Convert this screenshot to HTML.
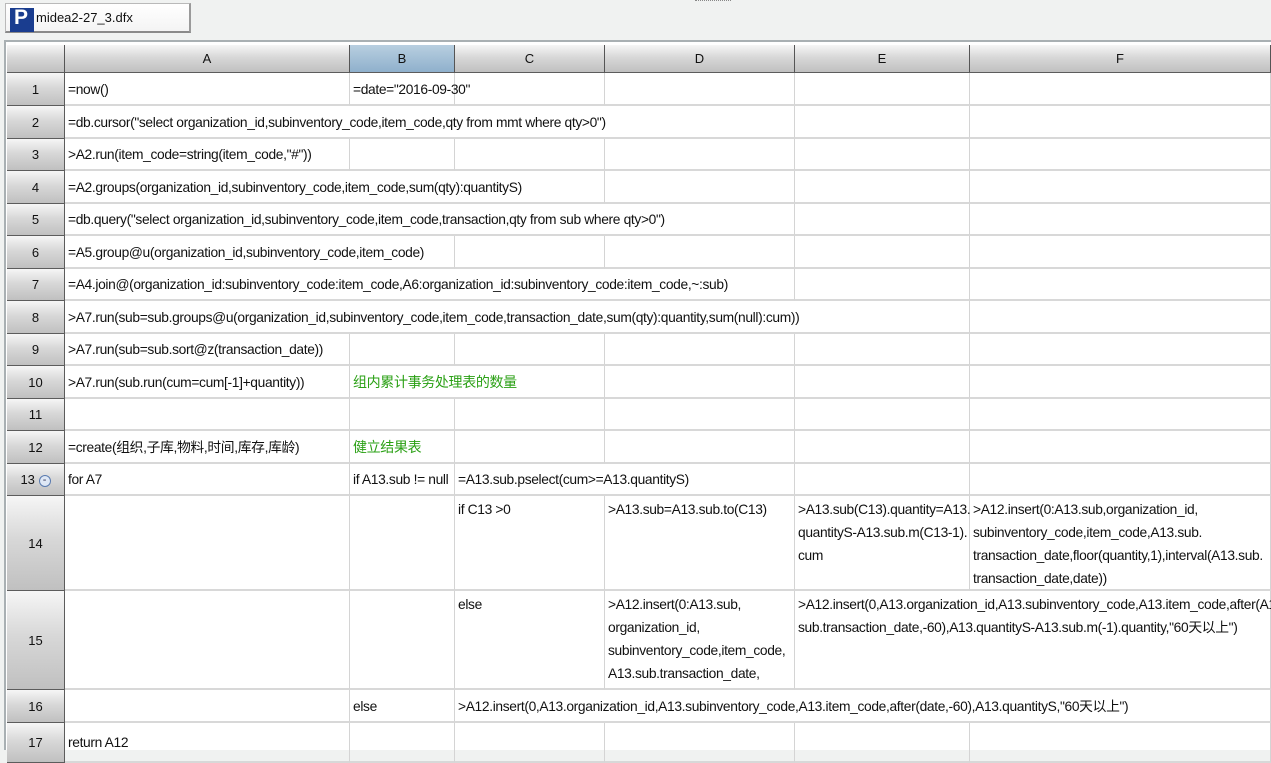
<!DOCTYPE html>
<html><head><meta charset="utf-8"><style>
*{margin:0;padding:0;box-sizing:border-box}
body{width:1271px;height:750px;overflow:hidden;background:#f0f2f1;font-family:"Liberation Sans","Noto Sans CJK SC",sans-serif;font-size:12.5px;color:#111;position:relative}
.tab{position:absolute;left:5px;top:3px;width:186px;height:30px;background:linear-gradient(#fff,#f4f4f4);border:1px solid #b9b9b9;border-bottom:2px solid #8a8a8a;border-right:2px solid #9a9a9a}
.logo{position:absolute;left:4px;top:4px;width:24px;height:24px;background:#1a3d8f}
.logo b{position:absolute;left:4px;top:-2px;color:#fff;font:bold 21px "Liberation Sans",sans-serif}
.tab span{position:absolute;left:30px;top:6px;font-size:13px}
.grid{position:absolute;left:4px;top:40px;width:1267px;height:710px;background:#fff;border-left:2px solid #a9b0b3;border-top:2px solid #a9b0b3}
.row{position:absolute;left:7px;display:flex;width:1264px}
.h{background:linear-gradient(#f6f6f6,#d8d8d8 45%,#c0c0c0);border-right:1px solid #5c5c5c;border-bottom:1px solid #5c5c5c;text-align:center;font-size:13px;flex:none}
.c{flex:none;border-right:1px solid #d4d4d4;border-bottom:2px solid #d8d8d8;padding:3px 3px;white-space:nowrap;line-height:23px;overflow:visible;font-size:13.8px;letter-spacing:-0.35px;position:relative;z-index:1}
.g{color:#2aa014;font-size:14px}
.sel{background:linear-gradient(#b8cfe0,#8fb0cc)}
</style></head><body>
<div class="tab"><div class="logo"><b>P</b></div><span>midea2-27_3.dfx</span></div>
<div style="position:absolute;left:695px;top:0;width:36px;height:2px;border-top:1px dotted #888"></div>
<div class="grid"></div>
<div id="g"></div>
<script>
var W=[58,285,105,150,190,175,301];
var rows=[
[33,[["=now()",1],["=date=\"2016-09-30\"",1],["",1],["",1],["",1],["",1]]],
[33,[["=db.cursor(\"select organization_id,subinventory_code,item_code,qty from mmt where qty>0\")",4],["",1],["",1]]],
[32,[[">A2.run(item_code=string(item_code,\"#\"))",1],["",1],["",1],["",1],["",1],["",1]]],
[33,[["=A2.groups(organization_id,subinventory_code,item_code,sum(qty):quantityS)",3],["",1],["",1],["",1]]],
[32,[["=db.query(\"select organization_id,subinventory_code,item_code,transaction,qty from sub where qty>0\")",4],["",1],["",1]]],
[33,[["=A5.group@u(organization_id,subinventory_code,item_code)",2],["",1],["",1],["",1],["",1]]],
[32,[["=A4.join@(organization_id:subinventory_code:item_code,A6:organization_id:subinventory_code:item_code,~:sub)",4],["",1],["",1]]],
[33,[[">A7.run(sub=sub.groups@u(organization_id,subinventory_code,item_code,transaction_date,sum(qty):quantity,sum(null):cum))",5],["",1]]],
[32,[[">A7.run(sub=sub.sort@z(transaction_date))",1],["",1],["",1],["",1],["",1],["",1]]],
[33,[[">A7.run(sub.run(cum=cum[-1]+quantity))",1],["<span class=g>组内累计事务处理表的数量</span>",2],["",1],["",1],["",1]]],
[32,[["",1],["",1],["",1],["",1],["",1],["",1]]],
[33,[["=create(组织,子库,物料,时间,库存,库龄)",1],["<span class=g>健立结果表</span>",1],["",1],["",1],["",1],["",1]]],
[32,[["for A7",1],["if A13.sub != null",1],["=A13.sub.pselect(cum>=A13.quantityS)",2],["",1],["",1]]],
[95,[["",1],["",1],["if C13 >0",1],[">A13.sub=A13.sub.to(C13)",1],[">A13.sub(C13).quantity=A13.<br>quantityS-A13.sub.m(C13-1).<br>cum",1],[">A12.insert(0:A13.sub,organization_id,<br>subinventory_code,item_code,A13.sub.<br>transaction_date,floor(quantity,1),interval(A13.sub.<br>transaction_date,date))",1]]],
[99,[["",1],["",1],["else",1],[">A12.insert(0:A13.sub,<br>organization_id,<br>subinventory_code,item_code,<br>A13.sub.transaction_date,",1],[">A12.insert(0,A13.organization_id,A13.subinventory_code,A13.item_code,after(A13.<br>sub.transaction_date,-60),A13.quantityS-A13.sub.m(-1).quantity,\"60天以上\")",2]]],
[33,[["",1],["else",1],[">A12.insert(0,A13.organization_id,A13.subinventory_code,A13.item_code,after(date,-60),A13.quantityS,\"60天以上\")",4]]],
[40,[["return A12",1],["",1],["",1],["",1],["",1],["",1]]]
];
var h='';
h+='<div class="row" style="top:45px;height:28px">';
var L=['','A','B','C','D','E','F'];
for(var i=0;i<7;i++)h+='<div class="h'+(i==2?' sel':'')+'" style="width:'+W[i]+'px;line-height:27px;border-right:1px solid #555">'+L[i]+'</div>';
h+='</div>';
var y=73;
rows.forEach(function(r,n){
 var hh=r[0];
 var tall=hh>50;
 h+='<div class="row" style="top:'+y+'px;height:'+hh+'px">';
 h+='<div class="h" style="width:58px;height:'+hh+'px;line-height:'+hh+'px">'+(n+1)+(n==12?' <span style="display:inline-block;width:12px;height:12px;border-radius:50%;border:1px solid #5a7bb0;background:#dfe8f5;vertical-align:middle;line-height:8px;font-size:11px;color:#335">-</span>':'')+'</div>';
 var ci=1;
 r[1].forEach(function(c){var w=0;for(var k=0;k<c[1];k++)w+=W[ci+k];ci+=c[1];
  h+='<div class="c" style="width:'+w+'px;height:'+hh+'px;'+(tall?'padding-top:2px':'line-height:'+(hh-6)+'px')+'">'+c[0]+'</div>';});
 h+='</div>';y+=hh;});
document.getElementById('g').innerHTML=h;
</script>
</body></html>
